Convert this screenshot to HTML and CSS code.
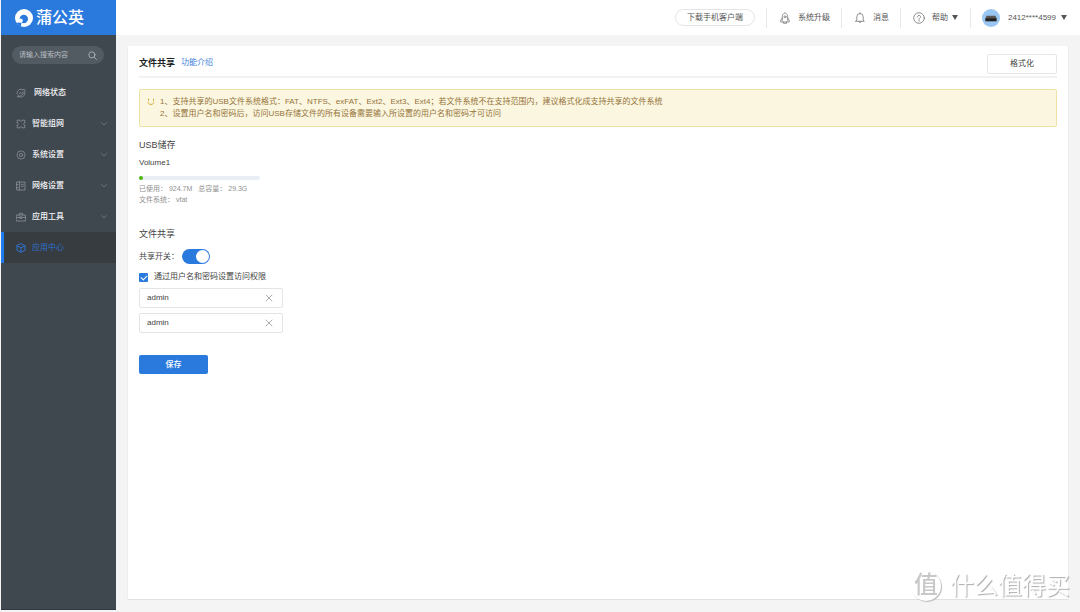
FILE: index.html
```
<!DOCTYPE html>
<html lang="zh-CN">
<head>
<meta charset="utf-8">
<title>蒲公英 - 文件共享</title>
<link rel="stylesheet" href="styles.css">
</head>
<body>
<div class="app">
  <aside class="sidebar">
    <a class="brand" href="#">
      <svg class="brand-mark" viewBox="0 0 18 18"><circle cx="9" cy="9" r="9" fill="#fff"/><circle cx="8.800" cy="10" r="4.200" fill="#2a79dd"/><path d="M1.500 14.500 5 12.500l1.500 1.200-.7 4z" fill="#2a79dd"/><path d="M3.500 10c2-1.200 4.200-.4 4.300 1.500.1 1.600-1.300 2.500-3 2.300-1.300-.1-2.300-1.500-1.300-3.800z" fill="#fff"/></svg>
      <span>蒲公英</span>
    </a>
    <form class="search">
      <input type="text" class="search-input" placeholder="请输入搜索内容" aria-label="搜索">
      <svg class="search-icon" viewBox="0 0 10 10"><circle cx="4.300" cy="4.300" r="3.400"/><path d="M6.800 6.800 9.400 9.400"/></svg>
    </form>
    <nav class="menu">
      <a class="menu-item" href="#">
        <svg class="icon" viewBox="0 0 10 10"><path d="M9 4.500A4 4 0 0 1 2 7.700M1 5.500A4 4 0 0 1 7 1.700M2 7.700C-.5 10 4 9 7 6 9.800 3 10 .3 7 1.700M3 5.800l1.300-1.200 1.200.8L7 3.800"/></svg>
        <span class="wide">网络状态</span>
      </a>
      <a class="menu-item" href="#">
        <svg class="icon" viewBox="0 0 10 10"><path d="M1.200 3.500V1.200h2.300M6.500 1.200h2.300v2.300M8.800 6.500v2.300H6.500M3.500 8.800H1.200V6.500M3.500 1.200 5 2.500l1.500-1.300M8.800 3.500 7.500 5l1.300 1.500M6.500 8.800 5 7.500 3.500 8.800M1.200 6.500 2.500 5 1.200 3.500"/></svg>
        <span>智能组网</span>
        <svg class="chevron" viewBox="0 0 6 4"><path d="M.5.5 3 3 5.500.5"/></svg>
      </a>
      <a class="menu-item" href="#">
        <svg class="icon" viewBox="0 0 10 10"><path d="M5 .8 6.300 1.500 8 1.800 8.500 3.600 9.200 5 8.500 6.400 8 8.200 6.300 8.500 5 9.200 3.700 8.500 2 8.200 1.500 6.400.8 5 1.500 3.600 2 1.800 3.700 1.500z"/><circle cx="5" cy="5" r="1.600"/></svg>
        <span>系统设置</span>
        <svg class="chevron" viewBox="0 0 6 4"><path d="M.5.5 3 3 5.500.5"/></svg>
      </a>
      <a class="menu-item" href="#">
        <svg class="icon" viewBox="0 0 10 10"><path d="M1 1h8v8H1zM3.400 1v8M5 3.300h2.500M5 5.300h2.500M1 3.500h1M1 6.500h1"/></svg>
        <span>网络设置</span>
        <svg class="chevron" viewBox="0 0 6 4"><path d="M.5.5 3 3 5.500.5"/></svg>
      </a>
      <a class="menu-item" href="#">
        <svg class="icon" viewBox="0 0 10 10"><path d="M.6 3h8.800v6H.6zM3.300 3V1.300h3.400V3M.6 5.500H4M6 5.500h3.400M4 4.800h2v1.500H4z"/></svg>
        <span>应用工具</span>
        <svg class="chevron" viewBox="0 0 6 4"><path d="M.5.5 3 3 5.500.5"/></svg>
      </a>
      <a class="menu-item active" href="#">
        <svg class="icon" viewBox="0 0 10 10"><path d="M5 .8 9 2.800v4.400L5 9.300 1 7.200V2.800zM1 2.800l4 2 4-2M5 4.800v4.500"/></svg>
        <span>应用中心</span>
      </a>
    </nav>
  </aside>
  <div class="page">
    <header class="topbar">
      <div class="cell"><button type="button" class="pill">下载手机客户端</button></div>
      <div class="cell upgrade">
        <svg class="top-icon" viewBox="0 0 10 12"><path d="M2.300 8.500V4.500C2.300 2.800 3.500 1.500 5 .7c1.500.8 2.700 2.100 2.700 3.800v4M2.300 6 .8 8v2h8.400V8L7.700 6M3.500 10v1.300h3V10"/><circle cx="5" cy="4.800" r="1"/></svg>
        <a href="#">系统升级</a>
      </div>
      <div class="cell news">
        <svg class="top-icon" viewBox="0 0 10 12"><path d="M.7 9.300h8.600L8.200 8V4.800a3.200 3.200 0 0 0-6.400 0V8zM5 1.600V.6M3.800 9.500c.2 1.500 2.200 1.500 2.400 0"/></svg>
        <a href="#">消息</a>
      </div>
      <div class="cell help">
        <svg class="top-icon round" viewBox="0 0 12 12"><circle cx="6" cy="6" r="5.300"/><path d="M4.400 4.900c0-2.200 3.200-2.100 3.200-.1C7.600 5.900 6 6 6 7.300M6 8.300v.9"/></svg>
        <a href="#">帮助</a><i class="caret"></i>
      </div>
      <div class="cell user">
        <svg class="avatar" viewBox="0 0 18 18"><circle cx="9" cy="9" r="9" fill="#9ac7f2"/><path d="M4.500 6.800h9l1 2.500v2.900h-11V9.300z" fill="#5b5754"/><path d="M3.500 9.300h11v2.900h-11z" fill="#222"/></svg>
        <a href="#">2412****4599</a><i class="caret"></i>
      </div>
    </header>
    <main class="card">
      <div class="heading">
        <h1>文件共享</h1>
        <a class="intro" href="#">功能介绍</a>
        <button type="button" class="format">格式化</button>
      </div>
      <div class="notice">
        <svg class="smile" viewBox="0 0 8 8"><path d="M1.500 1v1.500M6.500 1v1.500M1 4.500c.7 2.700 5.300 2.700 6 0"/></svg>
        <div>
          <p>1、支持共享的USB文件系统格式：FAT、NTFS、exFAT、Ext2、Ext3、Ext4；若文件系统不在支持范围内，建议格式化成支持共享的文件系统</p>
          <p>2、设置用户名和密码后，访问USB存储文件的所有设备需要输入所设置的用户名和密码才可访问</p>
        </div>
      </div>
      <section class="storage">
        <h2>USB储存</h2>
        <p class="volume">Volume1</p>
        <div class="meter"><div class="meter-used" style="width:3%"></div></div>
        <p class="meta"><span>已使用： 924.7M</span><span>总容量： 29.3G</span></p>
        <p class="meta">文件系统： vfat</p>
      </section>
      <form class="share">
        <h2>文件共享</h2>
        <div class="switch-row"><label for="share">共享开关：</label><input id="share" class="switch" type="checkbox" role="switch" checked></div>
        <div class="check-row"><input id="auth" class="check" type="checkbox" checked><label for="auth">通过用户名和密码设置访问权限</label></div>
        <div class="field">
          <input type="text" value="admin" aria-label="用户名">
          <button type="button" aria-label="清除用户名"><svg viewBox="0 0 8 8"><path d="M1 1l6 6M7 1 1 7"/></svg></button>
        </div>
        <div class="field">
          <input type="text" value="admin" aria-label="密码">
          <button type="button" aria-label="清除密码"><svg viewBox="0 0 8 8"><path d="M1 1l6 6M7 1 1 7"/></svg></button>
        </div>
        <button type="button" class="save">保存</button>
      </form>
    </main>
  </div>
</div>
<div class="watermark"><span class="seal">值</span><span>什么值得买</span></div>
</body>
</html>
```

FILE: styles.css
```
* { box-sizing: border-box; }
body { margin: 0; background: #f4f4f4; color: #444; font: 8px/12px "Liberation Sans", "Noto Sans CJK SC", sans-serif; }
h1, h2, p { margin: 0; }
a { color: inherit; text-decoration: none; }
button, input { font: inherit; color: inherit; margin: 0; }
svg { display: block; flex: none; fill: none; stroke-linecap: round; stroke-linejoin: round; }

.app { display: flex; min-height: 100vh; padding: 0 0 2px 1px; }

.sidebar { width: 115px; flex: none; background: #3f474f; border-bottom: 1px solid #303941; }
.brand { display: flex; align-items: center; gap: 3px; height: 35px; padding-left: 14px; background: #2a79dd; color: #fff; font-size: 16px; line-height: 20px; font-weight: 500; }
.brand-mark { width: 18px; height: 18px; }
.search { display: flex; align-items: center; height: 18px; margin: 11px 12px 12px 11px; padding: 0 7px; border-radius: 9px; background: #525a62; }
.search-input { flex: 1; min-width: 0; padding: 0; border: 0; outline: 0; background: none; font-size: 7px; color: #c3c7ca; }
.search-input::placeholder { color: #b9bdc1; opacity: 1; }
.search-icon { width: 9px; height: 9px; stroke: #aeb3b8; }
.menu { padding-top: 1px; }
.menu-item { display: flex; align-items: center; gap: 6px; height: 31px; padding: 0 9px 0 12px; border-left: 3px solid transparent; color: #f4f5f6; font-weight: 500; }
.icon { width: 10px; height: 10px; stroke: #969ba0; stroke-width: 0.7; }
.wide { padding-left: 2px; }
.chevron { width: 6px; height: 4px; margin-left: auto; stroke: #7c8288; stroke-width: 0.7; }
.menu-item.active { background: #373c41; border-left-color: #1f7cf0; color: #2f72d0; font-weight: 400; }
.active .icon { stroke: #2f72d0; stroke-width: 1; }

.page { flex: 1; min-width: 0; display: flex; flex-direction: column; }
.topbar { display: flex; justify-content: flex-end; align-items: center; height: 35px; background: #fff; color: #555; padding-right: 13px; }
.cell { display: flex; align-items: center; height: 20px; padding: 0 11px; }
.cell + .cell { border-left: 1px solid #e8e8e8; }
.pill { height: 17px; width: 80px; padding: 0; border: 1px solid #e4e4e4; border-radius: 9px; background: #fff; }
.top-icon { width: 10px; height: 12px; stroke: #777; stroke-width: 0.8; }
.top-icon.round { width: 12px; }
.upgrade, .news { gap: 8px; padding: 0 11px 0 13px; }
.help { gap: 7px; padding: 0 12px; }
.user { gap: 8px; padding: 0 0 0 11px; }
.avatar { width: 18px; height: 18px; }
.caret { border: 3px solid transparent; border-top: 5px solid #555; border-bottom: 0; margin-left: -3px; }

.card { flex: 1; margin: 11px 11px 10px 11px; padding: 8px 11px; background: #fff; border: 1px solid #eee; border-top: 0; border-bottom-color: #e2e2e2; border-radius: 2px; }
.heading { display: flex; align-items: center; gap: 6px; height: 24px; border-bottom: 2px solid #f2f2f2; padding-bottom: 4px; }
h1 { font-size: 9px; line-height: 12px; font-weight: 700; color: #222; }
.intro { color: #3b80dc; }
.format { width: 70px; height: 20px; margin: 1px 0 0 auto; padding: 0; border: 1px solid #e6e6e6; border-radius: 2px; background: #fff; }
.notice { display: flex; gap: 5px; margin-top: 11px; padding: 6px 7px; border: 1px solid #efe0a4; border-radius: 2px; background: #faf6df; color: #96733a; }
.smile { width: 8px; height: 8px; margin-top: 2px; stroke: #d8ab3c; }
.notice p { line-height: 12px; }
h2 { font-size: 9px; line-height: 14px; font-weight: 400; color: #444; }
.storage { margin-top: 11px; }
.volume { margin-top: 5px; }
.meter { width: 121px; height: 4px; margin: 7px 0 3px; border-radius: 2px; background: #e9eef4; }
.meter-used { height: 4px; border-radius: 2px; background: #4fb80e; }
.meta { display: flex; gap: 6px; font-size: 7px; line-height: 11px; color: #909090; }
.share { margin-top: 22px; }
.switch-row, .check-row { display: flex; align-items: center; }
.switch-row { gap: 3px; margin-top: 8px; }
.switch { appearance: none; display: flex; justify-content: flex-end; width: 28px; height: 15px; border-radius: 8px; padding: 1px; background: #2a79dd; }
.switch::after { content: ""; width: 13px; height: 13px; border-radius: 50%; background: #fff; }
.switch:not(:checked) { justify-content: flex-start; background: #ccc; }
.check-row { gap: 6px; margin: 7px 0 5px; }
.check { appearance: none; display: grid; place-items: center; width: 9px; height: 9px; border-radius: 1px; background: #2a79dd; }
.check:checked::after { content: ""; width: 5px; height: 3px; border: solid #fff; border-width: 0 0 1px 1px; transform: rotate(-45deg); }
.field { display: flex; align-items: center; width: 144px; height: 20px; margin-bottom: 5px; padding: 0 9px 0 7px; border: 1px solid #e4e4e4; border-radius: 2px; }
.field input { flex: 1; min-width: 0; padding: 0; border: 0; outline: 0; background: none; }
.field button { padding: 0; border: 0; background: none; }
.field svg { width: 8px; height: 8px; stroke: #999; stroke-width: 0.8; }
.save { width: 69px; height: 19px; margin-top: 17px; padding: 0; border: 0; border-radius: 2px; background: #2a79dd; color: #fff; font-weight: 500; }

.watermark { position: fixed; right: 10px; bottom: 10px; display: flex; align-items: center; gap: 9px; color: #fff; font-size: 24px; line-height: 32px; text-shadow: 1px 1px 1px #aaa; pointer-events: none; }
.seal { width: 30px; height: 30px; line-height: 28px; text-align: center; border-radius: 50%; font-weight: 500; color: #c8c8c8; text-shadow: none; background: #fff; box-shadow: 1px 1px 1px #bbb; }
```
